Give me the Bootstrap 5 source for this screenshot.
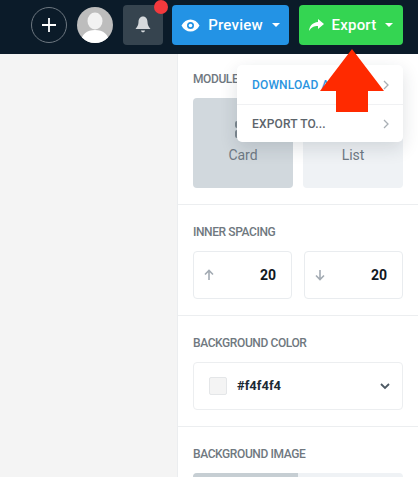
<!DOCTYPE html>
<html lang="en">
<head>
    <meta charset="UTF-8">
    <meta name="viewport" content="width=device-width, initial-scale=1.0">
    <title>Export</title>
    <link href="https://cdn.jsdelivr.net/npm/bootstrap@5.3.0/dist/css/bootstrap.min.css" rel="stylesheet">
    <style>
        html, body { height: 100%; overflow: hidden; }
        body { background-color: #f4f4f4; font-family: Roboto, "Noto Sans", sans-serif; position: relative; }
        .top-bar { height: 54px; background-color: #0b1b29; padding: 5px 11px 0 31px; }
        .add-btn { width: 36px; height: 36px; border: 1.5px solid #6d7780; border-radius: 50%; margin-top: 2px; }
        .avatar-pic { width: 36px; height: 36px; border-radius: 50%; margin: 2px 10px; overflow: hidden; }
        .bell-btn { width: 40px; height: 40px; background-color: #36444f; border-radius: 4px; margin-right: 9px; position: relative; }
        .bell-dot { position: absolute; top: -5px; right: -5px; width: 14px; height: 14px; background-color: #f2393d; border-radius: 50%; }
        .act-btn { height: 40px; border-radius: 4px; color: #fff; font-size: 15px; font-weight: 500; gap: 8px; letter-spacing: .2px; }
        .act-preview { width: 117px; background-color: #2393e5; margin-right: 10px; }
        .act-export { width: 104px; background-color: #34d552; }
        .act-caret { width: 0; height: 0; border-left: 4px solid transparent; border-right: 4px solid transparent; border-top: 4px solid #fff; margin-left: 1px; }
        .main-area { height: 423px; }
        .side-panel { width: 241px; margin-left: 177px; height: 100%; background-color: #fff; border-left: 1px solid #ebedef; overflow: hidden; }
        .panel-sec { padding: 19px 15px 19px 15px; border-bottom: 1px solid #eceef0; }
        .sec-label { font-size: 12px; font-weight: 500; color: #6f7880; line-height: 16px; margin-bottom: 11px; letter-spacing: -.4px; }
        .sec-module { height: 151px; padding-top: 17px; }
        .sec-spacing { height: 111px; }
        .sec-color { height: 111px; }
        .opt-tile { width: 100px; height: 90px; border-radius: 4px; font-size: 14px; color: #6f7a84; padding-bottom: 22px; gap: 7px; }
        .opt-on { background-color: #d1d8dd; }
        .opt-off { background-color: #eff2f5; }
        .opt-gap { gap: 10px; }
        .num-box { width: 99px; height: 48px; border: 1px solid #e9ecef; border-radius: 4px; padding: 0 15px 0 9px; font-size: 14px; font-weight: 700; color: #11181f; }
        .num-gap { gap: 12px; }
        .pick-box { width: 210px; height: 48px; border: 1px solid #eceef0; border-radius: 4px; padding: 0 12px 0 15px; font-size: 13px; font-weight: 700; color: #1d2a35; }
        .pick-swatch { width: 18px; height: 18px; background-color: #f4f4f4; border: 1px solid #e4e6e8; border-radius: 2px; margin-right: 10px; }
        .seg-bar { width: 210px; height: 12px; background-color: #eff2f5; border-radius: 4px 4px 0 0; overflow: hidden; }
        .seg-fill { width: 105px; height: 100%; background-color: #c6ced3; }
        .drop-card { position: absolute; left: 237px; top: 65px; width: 166px; height: 77px; background-color: #fff; border-radius: 5px; box-shadow: 0 6px 18px rgba(30, 45, 60, .14); font-size: 12px; font-weight: 500; letter-spacing: .15px; }
        .drop-row { height: 39px; padding: 0 14px 0 15px; color: #5c646b; }
        .drop-row + .drop-row { border-top: 1px solid #f0f1f3; height: 38px; }
        .drop-active { color: #2a94e0; }
        .red-arrow { position: absolute; left: 320px; top: 49px; }
    </style>
</head>
<body>
    <!-- Header -->
    <div class="top-bar d-flex align-items-start">
        <div class="add-btn d-flex align-items-center justify-content-center">
            <svg width="16" height="16" viewBox="0 0 16 16"><path d="M8 1v14M1 8h14" stroke="#fff" stroke-width="1.800"/></svg>
        </div>
        <div class="avatar-pic">
            <svg width="36" height="36" viewBox="0 0 36 36"><rect width="36" height="36" fill="#bdbdbd"/><ellipse cx="18" cy="14" rx="7.500" ry="8.500" fill="#f2f2f2"/><path d="M4 36c0-9 6-13 14-13s14 4 14 13z" fill="#fff"/></svg>
        </div>
        <div class="bell-btn d-flex align-items-center justify-content-center">
            <svg width="16" height="18" viewBox="0 0 16 18"><path d="M8 .5c3 0 4.500 2.500 4.500 5.500 0 3.500 1.500 5 3 7H.5c1.500-2 3-3.500 3-7C3.500 3 5 .5 8 .5z" fill="#d5d9dc"/><path d="M6 14.500h4c0 1.200-1 1.800-2 1.800s-2-.6-2-1.800z" fill="#d5d9dc"/></svg>
            <span class="bell-dot"></span>
        </div>
        <div class="act-btn act-preview d-flex align-items-center justify-content-center">
            <svg width="19" height="13" viewBox="0 0 19 13"><path d="M.5 6.500C2.500 2.500 6 .5 9.500.5s7 2 9 6c-2 4-5.500 6-9 6s-7-2-9-6z" fill="#fff"/><circle cx="9.500" cy="6.500" r="3.500" fill="#2393e5"/><circle cx="9.500" cy="6.500" r="1.800" fill="#fff"/></svg>
            <span>Preview</span><span class="act-caret"></span>
        </div>
        <div class="act-btn act-export d-flex align-items-center justify-content-center">
            <svg width="15" height="12" viewBox="0 0 15 12"><path d="M9 0l6 5-6 5V7C5 7 2.500 8 0 12c.5-5 3.500-8.500 9-9z" fill="#fff"/></svg>
            <span>Export</span><span class="act-caret"></span>
        </div>
    </div>

    <!-- Right panel -->
    <div class="main-area">
        <div class="side-panel">
            <div class="panel-sec sec-module">
                <div class="sec-label">MODULE</div>
                <div class="d-flex opt-gap">
                    <div class="opt-tile opt-on d-flex flex-column align-items-center justify-content-end">
                        <svg width="16" height="17" viewBox="0 0 16 17"><path d="M2 0h12v7H2a2 2 0 0 1-2-2V2a2 2 0 0 1 2-2zM2 9h12v8H2a2 2 0 0 1-2-2v-4a2 2 0 0 1 2-2z" fill="#7d8890"/></svg>
                        <span>Card</span>
                    </div>
                    <div class="opt-tile opt-off d-flex flex-column align-items-center justify-content-end">
                        <span>List</span>
                    </div>
                </div>
            </div>
            <div class="panel-sec sec-spacing">
                <div class="sec-label">INNER SPACING</div>
                <div class="d-flex num-gap">
                    <div class="num-box d-flex align-items-center justify-content-between">
                        <svg width="12" height="12" viewBox="0 0 12 12"><path d="M6 11V2M2 5.500L6 1.500l4 4" fill="none" stroke="#a3abb3" stroke-width="1.600"/></svg>
                        <span>20</span>
                    </div>
                    <div class="num-box d-flex align-items-center justify-content-between">
                        <svg width="12" height="12" viewBox="0 0 12 12"><path d="M6 1v9M2 6.500l4 4 4-4" fill="none" stroke="#a3abb3" stroke-width="1.600"/></svg>
                        <span>20</span>
                    </div>
                </div>
            </div>
            <div class="panel-sec sec-color">
                <div class="sec-label">BACKGROUND COLOR</div>
                <div class="pick-box d-flex align-items-center">
                    <span class="pick-swatch"></span>
                    <span class="flex-grow-1">#f4f4f4</span>
                    <svg width="10" height="7" viewBox="0 0 10 7"><path d="M1 1l4 4 4-4" fill="none" stroke="#4d5963" stroke-width="1.800"/></svg>
                </div>
            </div>
            <div class="panel-sec border-0">
                <div class="sec-label">BACKGROUND IMAGE</div>
                <div class="seg-bar"><div class="seg-fill"></div></div>
            </div>
        </div>
    </div>

    <!-- Export menu -->
    <div class="drop-card">
        <div class="drop-row drop-active d-flex align-items-center justify-content-between">
            <span>DOWNLOAD AS</span>
            <svg width="6" height="10" viewBox="0 0 6 10"><path d="M1 1l4 4-4 4" fill="none" stroke="#a9afb5" stroke-width="1.300"/></svg>
        </div>
        <div class="drop-row d-flex align-items-center justify-content-between">
            <span>EXPORT TO...</span>
            <svg width="6" height="10" viewBox="0 0 6 10"><path d="M1 1l4 4-4 4" fill="none" stroke="#a9afb5" stroke-width="1.300"/></svg>
        </div>
    </div>

    <!-- Red arrow -->
    <svg class="red-arrow" width="64" height="63" viewBox="0 0 64 63"><path d="M32 0l32 42H48v21H16V42H0z" fill="#ff2a00"/></svg>

    <script src="https://cdn.jsdelivr.net/npm/bootstrap@5.3.0/dist/js/bootstrap.bundle.min.js"></script>
</body>
</html>
